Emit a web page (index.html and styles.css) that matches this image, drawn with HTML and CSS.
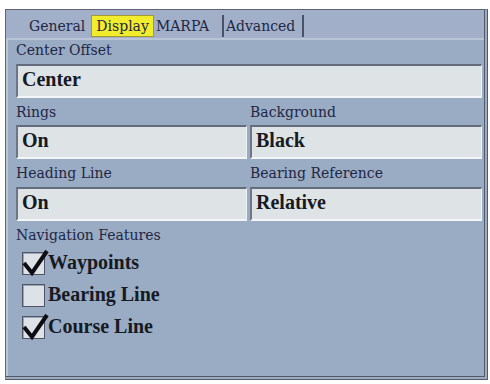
FILE: index.html
```html
<!DOCTYPE html>
<html>
<head>
<meta charset="utf-8">
<link rel="stylesheet" href="styles.css">
</head>
<body>
<div class="panel">
  <div class="tabs">
    <span class="tab tab-general">General</span>
    <span class="tab tab-active">Display</span>
    <span class="tab tab-sep tab-marpa">MARPA</span>
    <span class="tab tab-sep tab-adv">Advanced</span>
  </div>
  <div class="content">
    <div class="label label-first span2">Center Offset</div>
    <div class="field span2">Center</div>
    <div class="label">Rings</div>
    <div class="label">Background</div>
    <div class="field">On</div>
    <div class="field">Black</div>
    <div class="label label-tall">Heading Line</div>
    <div class="label label-tall">Bearing Reference</div>
    <div class="field">On</div>
    <div class="field">Relative</div>
    <div class="label span2">Navigation Features</div>
    <div class="checks span2">
      <div class="check-row">
        <span class="box checked"><svg class="tick" width="28" height="28" viewBox="0 0 28 28"><polyline points="2,13 10,23 25,1" /></svg></span>
        <span class="check-text">Waypoints</span>
      </div>
      <div class="check-row">
        <span class="box"></span>
        <span class="check-text">Bearing Line</span>
      </div>
      <div class="check-row">
        <span class="box checked"><svg class="tick" width="28" height="28" viewBox="0 0 28 28"><polyline points="2,13 10,23 25,1" /></svg></span>
        <span class="check-text">Course Line</span>
      </div>
    </div>
  </div>
</div>
</body>
</html>
```
FILE: styles.css
```css
html, body {
  margin: 0;
  padding: 0;
  background: #ffffff;
}

.panel {
  box-sizing: border-box;
  width: 483px;
  height: 371px;
  margin: 9px 0 0 5px;
  background: #9aabc4;
  border-top: 1px solid #5f6571;
  border-left: 1px solid #5f6571;
  border-right: 4px double #545a66;
  border-bottom: 4px double #545a66;
  box-shadow: inset 2px 2px 0 #bcc5d3;
  font-family: "DejaVu Serif", serif;
}

.tabs {
  box-sizing: border-box;
  height: 30px;
  padding: 5px 0 0 23px;
  display: flex;
  align-items: flex-start;
  background: #a1b0c8;
  border-bottom: 2px solid #b9c4d5;
}

.tab {
  box-sizing: border-box;
  height: 22px;
  line-height: 22px;
  font-size: 14px;
  color: #1e2744;
  white-space: nowrap;
}

.tab-general {
  margin-right: 6px;
}

.tab-active {
  padding: 0 4px;
  background: #f1ec2c;
  border: 1px solid #a49a2e;
  line-height: 20px;
}

.tab-sep {
  border-right: 2px solid #4a5366;
  padding-left: 2px;
}

.tab-marpa {
  width: 70px;
}

.tab-adv {
  width: 80px;
}

.content {
  padding: 0 2px 0 10px;
  display: grid;
  grid-template-columns: 231px 1fr;
  column-gap: 3px;
}

.span2 {
  grid-column: 1 / span 2;
}

.label {
  padding: 5px 0 4px 0;
  line-height: 18px;
  font-size: 14px;
  color: #1e2744;
  white-space: nowrap;
}

.label-first {
  padding: 1px 0 5px 0;
}

.label-tall {
  padding: 5px 0 5px 0;
}

.field {
  box-sizing: border-box;
  height: 34px;
  padding: 0 0 4px 4px;
  background: #dee3e6;
  border-top: 2px solid #636b7c;
  border-left: 2px solid #6d7587;
  border-bottom: 2px solid #f3f5f6;
  border-right: 1px solid #eef1f3;
  font-family: "Liberation Serif", serif;
  font-weight: bold;
  font-size: 20px;
  line-height: 26px;
  color: #161a22;
}

.checks {
  padding: 1px 0 0 6px;
  display: flex;
  flex-direction: column;
}

.check-row {
  height: 32px;
  display: flex;
  align-items: flex-start;
}

.box {
  position: relative;
  box-sizing: border-box;
  width: 23px;
  height: 23px;
  margin-top: 3px;
  margin-right: 3px;
  background: #dde2e6;
  border: 1px solid #4e5463;
  box-shadow: inset 1px 1px 0 #9ea6b3;
}

.tick {
  position: absolute;
  left: -1px;
  top: -3px;
  overflow: visible;
}

.tick polyline {
  fill: none;
  stroke: #0b0d12;
  stroke-width: 4;
  stroke-linejoin: miter;
}

.check-text {
  font-family: "Liberation Serif", serif;
  font-weight: bold;
  font-size: 20px;
  line-height: 26px;
  color: #161a22;
  white-space: nowrap;
}
```
